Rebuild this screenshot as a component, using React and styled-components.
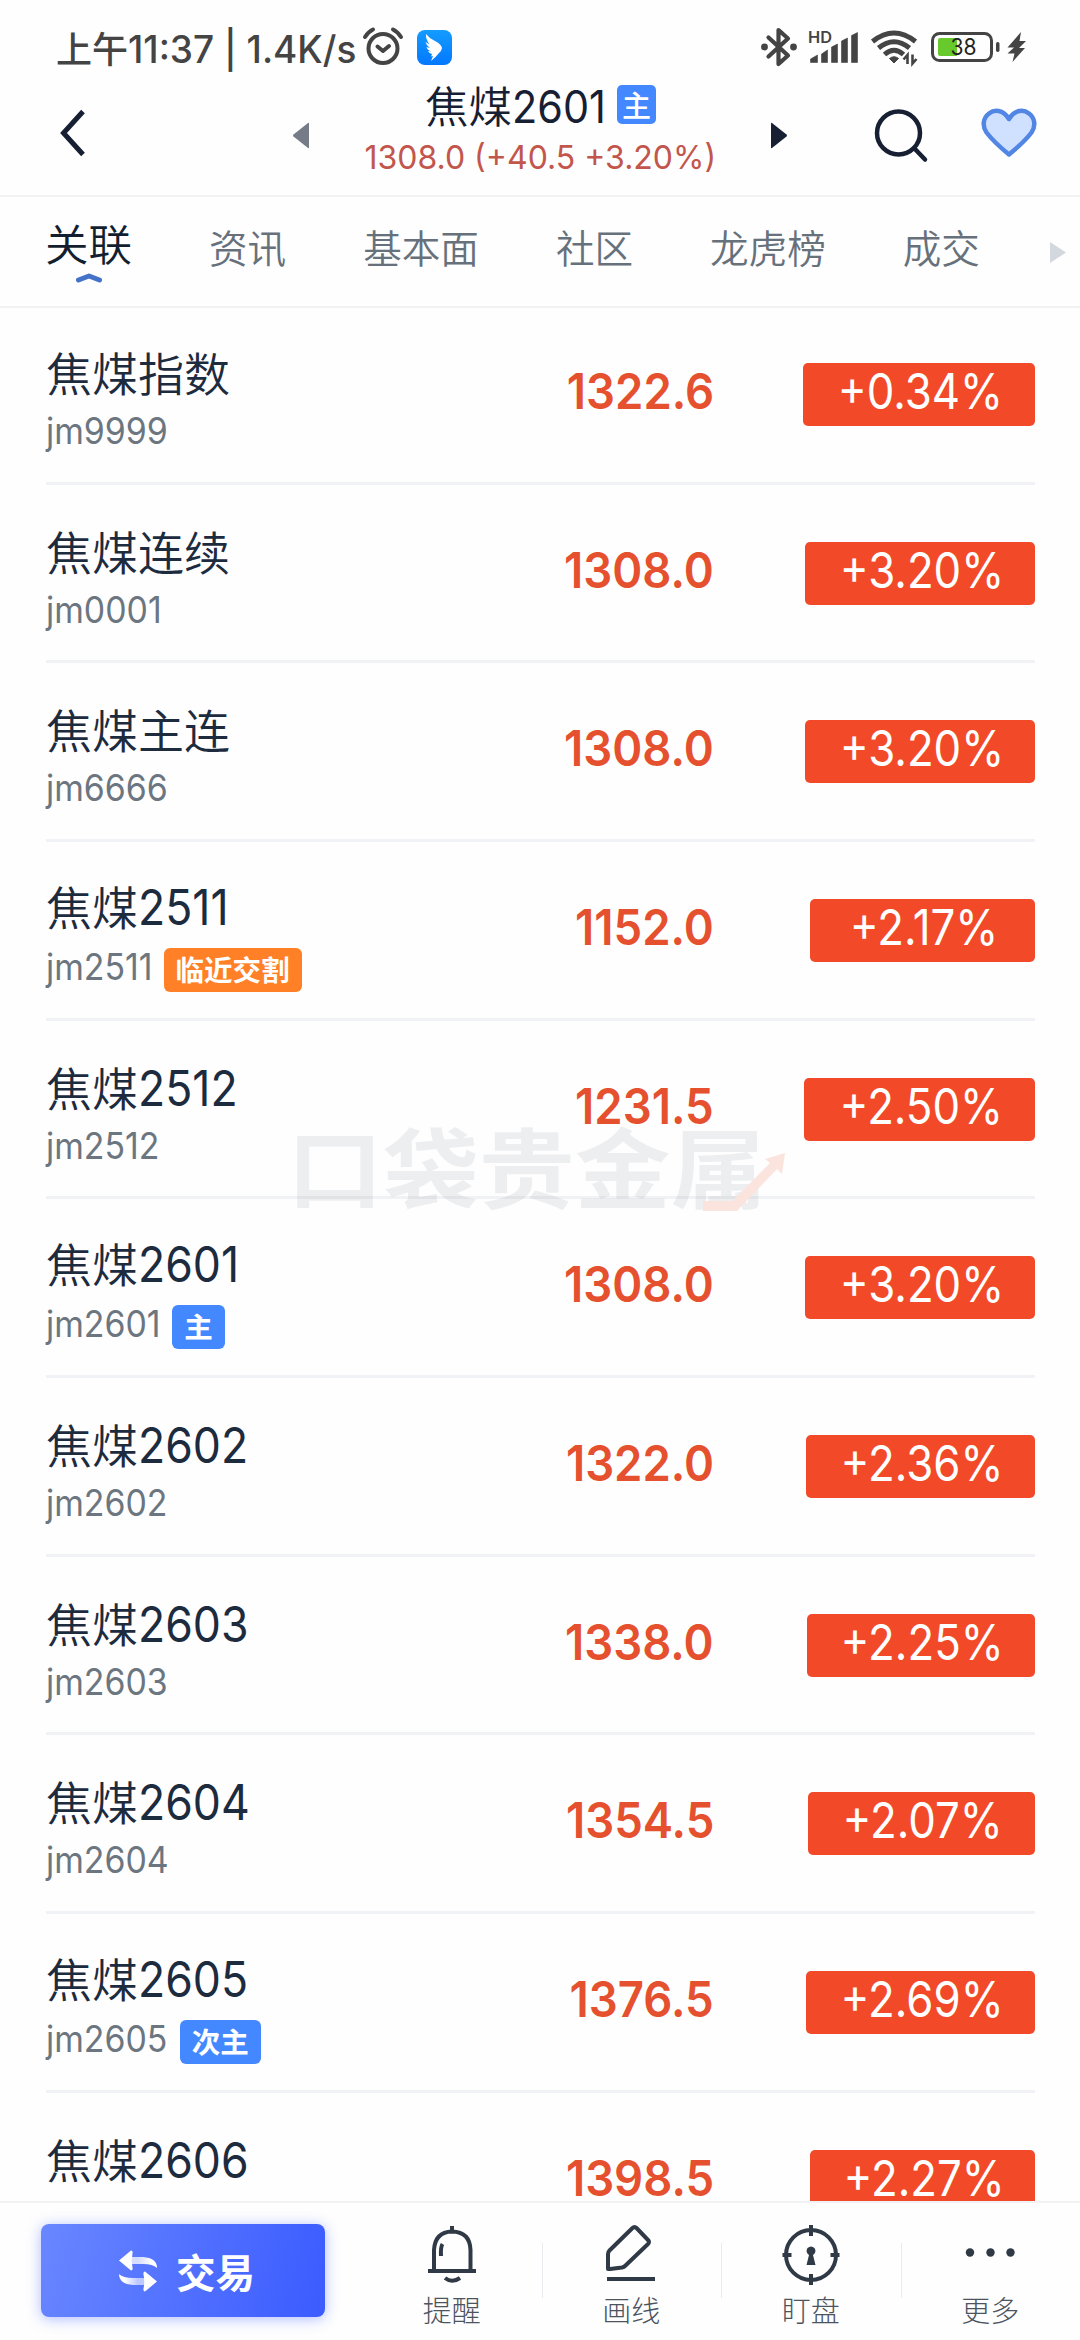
import React from 'react';
import styled, {createGlobalStyle} from 'styled-components';

const GlobalStyle = createGlobalStyle`
  * {
    box-sizing: border-box;
  }

  body {
    margin: 0;
    background: #fefefe;
    font-family: "Noto Sans CJK SC", "Noto Sans", sans-serif;
    color: #1d2b3e;
  }

  svg {
    display: block;
    flex: none;
    overflow: visible;
  }
`;

const Page = styled.div`
  position: relative;
  display: flex;
  flex-direction: column;
  width: 1080px;
  height: 2340px;
  overflow: hidden;
`;

// latin and digits run a little narrower than the chinese text
const Num = styled.span`
  display: inline-block;
  font-family: Inter, "Noto Sans", sans-serif;
  font-size: ${p => p.$size}px;
  font-weight: ${p => p.$weight || 400};
  line-height: 1;
  white-space: pre;
  transform: scaleX(${p => p.$scale || 0.91});
  transform-origin: ${p => p.$origin || 'left'} center;
`;

/* status bar */

const StatusBar = styled.div`
  display: flex;
  justify-content: space-between;
  height: 76px;
  padding: 24px 54px 0 56px;
  color: #444;
`;

const StatusLeft = styled.div`
  display: flex;
  height: 46px;
  align-items: center;
  gap: 14px;
`;

const Clock = styled.div`
  width: 293px;
  font-size: 36px;
  font-weight: 500;
  line-height: 44px;
  white-space: nowrap;
`;

const StatusRight = styled(StatusLeft)`
  gap: 12px;

  svg:last-child {
    margin-left: -5px;
  }
`;

/* header */

const Header = styled.header`
  display: flex;
  height: 121px;
  border-bottom: 2px solid #f1f2f3;
`;

const Back = styled.div`
  width: 292px;
  padding: 33px 0 0 60px;
`;

const Arrow = styled.div`
  padding-top: 46px;
`;

const Heading = styled.div`
  display: flex;
  flex-direction: column;
  align-items: center;
  width: 460px;
`;

const HeadingTitle = styled.div`
  display: flex;
  align-items: flex-start;
  height: 60px;
  padding-left: 1px;
  font-size: 43.5px;
  font-weight: 350;
  line-height: 58px;
  color: #172033;
`;

const MainTag = styled.span`
  width: 39px;
  height: 39px;
  margin: 9px 0 0 4px;
  border-radius: 5px;
  background: #4488ff;
  color: #fff;
  font-size: 29px;
  font-weight: 500;
  line-height: 38px;
  text-align: center;
`;

const HeadingPrice = styled.div`
  margin-top: 5px;
  color: #c2564c;
`;

const Actions = styled.div`
  display: flex;
  gap: 53px;
  padding: 32px 0 0 86px;
`;

/* tabs */

const Tabs = styled.nav`
  display: flex;
  height: 111px;
  padding-left: 45px;
  border-bottom: 2px solid #f1f2f3;
`;

const Tab = styled.div`
  display: flex;
  flex-direction: column;
  align-items: center;
  margin-right: 77px;
  padding-top: 29px;
  font-size: 38.6px;
  font-weight: 350;
  line-height: 40px;
  color: #67717c;
`;

const ActiveTab = styled(Tab)`
  padding-top: 24px;
  font-size: 43.5px;
  line-height: 44px;
  color: #131f30;

  svg {
    margin-top: 7px;
  }
`;

const TabsMore = styled.div`
  margin-left: -7px;
  padding-top: 45px;
`;

/* list */

const List = styled.div`
  flex: 1;
  min-height: 0;
  overflow: hidden;
  padding: 0 45px 0 46px;
  margin-top: -2px;
`;

const Row = styled.div`
  display: flex;
  height: 178.67px;
  border-bottom: 3px solid #f1f2f5;
`;

const Info = styled.div`
  display: flex;
  flex-direction: column;
  justify-content: space-between;
  width: 400px;
  height: 150px;
  padding-top: ${p => p.$tagged ? 33 : 35}px;
`;

const Name = styled.div`
  height: 60px;
  font-size: 46px;
  font-weight: 350;
  line-height: 60px;
  white-space: nowrap;
`;

const CodeLine = styled.div`
  display: flex;
  height: 44px;
  color: #6c7680;

  ${Num} {
    line-height: 38px;
  }
`;

const Tag = styled.span`
  height: 44px;
  margin-left: 1px;
  padding: 0 12px;
  border-radius: 6px;
  background: ${p => p.$color};
  color: #fff;
  font-size: 28.5px;
  font-weight: 700;
  line-height: 42px;
`;

const Price = styled.div`
  width: 268px;
  padding-top: 57px;
  text-align: right;
  color: #e5512f;

  ${Num} {
    line-height: 56px;
  }
`;

const Change = styled.div`
  display: flex;
  justify-content: center;
  width: ${p => p.$width}px;
  height: 63px;
  margin: 57px 0 0 auto;
  padding-left: 3px;
  border-radius: 5px;
  background: #f24a28;
  color: #fff;

  ${Num} {
    line-height: 56px;
  }
`;

/* watermark lies over the list */

const Watermark = styled.div`
  position: absolute;
  left: 292px;
  top: 1124px;
  width: 500px;
  height: 92px;

  svg {
    position: absolute;
    left: 411px;
    top: 28px;
  }
`;

const WatermarkText = styled.div`
  font-size: 94px;
  font-weight: 700;
  line-height: 90px;
  color: rgba(30, 45, 70, 0.075);
  white-space: nowrap;
  transform: translate(-5px, -5px) scale(1.02, 0.93);
  transform-origin: left center;
`;

/* bottom bar */

const BottomBar = styled.footer`
  display: flex;
  height: 139px;
  padding-left: 41px;
  border-top: 2px solid #f1f2f3;
`;

const TradeButton = styled.div`
  display: flex;
  align-items: center;
  gap: 18px;
  width: 284px;
  height: 93px;
  margin: 21px 37px 0 0;
  padding-left: 77px;
  border-radius: 8px;
  background: linear-gradient(105deg, #6987ff, #3b5bff);
  box-shadow: 0 2px 14px rgba(80, 110, 255, 0.45);
  color: #fff;
  font-size: 39.5px;
  font-weight: 700;
  line-height: 88px;
`;

const Tool = styled.div`
  position: relative;
  display: flex;
  flex-direction: column;
  align-items: center;
  width: 179.5px;
  padding-top: 21px;
  font-size: 29px;
  font-weight: 300;
  line-height: 34px;
  color: #4c5460;

  svg {
    margin-bottom: 6px;
  }

  & + &::before {
    content: "";
    position: absolute;
    left: 0;
    top: 40px;
    width: 1px;
    height: 55px;
    background: #e9ebee;
  }
`;

const AlarmIcon = () => (
  <svg width="40" height="38" viewBox="0 0 40 38" fill="none" stroke="#444" strokeWidth="4">
    <circle cx="20" cy="20.5" r="14.5"/>
    <path d="M14.5 18.500l5.500 4.500 6-5" strokeLinecap="round" strokeLinejoin="round"/>
    <path d="M2 9Q5 4 10 1.500M38 9Q35 4 30 1.500" strokeLinecap="round"/>
  </svg>
);

const WingIcon = () => (
  <svg width="35" height="35" viewBox="0 0 35 35">
    <defs>
      <linearGradient id="wing" x1="0" y1="0" x2="0" y2="1">
        <stop offset="0" stopColor="#149cff"/>
        <stop offset="1" stopColor="#0378ff"/>
      </linearGradient>
    </defs>
    <rect width="35" height="35" rx="8" fill="url(#wing)"/>
    <path d="M9 4q3 4 9 7 6 3 7 7-.5 3-3 5-3 4-8 8l2-5-2 .5 1-2.500q-3-.5-4-3l3 .5q-4-2-4.500-4.500l3.500 1q-4-3-4.500-6l4 2.500Q8.500 9 9 4z" fill="#fff"/>
  </svg>
);

const BluetoothIcon = () => (
  <svg width="36" height="40" viewBox="0 0 36 40" fill="none" stroke="#444" strokeWidth="4.200">
    <path d="M7.500 10.500L27 28.500 17.500 37V3L27 11.500 7.500 29.500" strokeLinejoin="round" strokeLinecap="round"/>
    <circle cx="3.500" cy="20" r="3.400" fill="#444" stroke="none"/>
    <circle cx="32.500" cy="20" r="3.400" fill="#444" stroke="none"/>
  </svg>
);

const SignalIcon = () => (
  <svg width="50" height="34" viewBox="0 0 50 34" fill="#444">
    <text x="-1" y="12.500" fontFamily="Inter" fontSize="16" fontWeight="600" textLength="24" lengthAdjust="spacingAndGlyphs">HD</text>
    <path d="M1.500 29l7-4v7.500h-7zM12.500 24l6-4v12.500h-6zM22.500 17l6-3v18.500h-6zM32.500 11l6-3v24.500h-6zM42.500 5.500l6-3v30h-6z" stroke="#444" strokeWidth=".6" strokeLinejoin="round"/>
  </svg>
);

const WifiIcon = () => (
  <svg width="48" height="36" viewBox="0 0 48 36" fill="none" stroke="#444" strokeWidth="5">
    <path d="M1.500 12.500Q23-4.500 44.500 12.500M7.500 19Q23 6.500 38.500 19M13.500 25.500Q23 17 32.500 25.500"/>
    <path d="M18.500 29.500q4.500-3.500 9 0L23 34z" fill="#444" stroke="#444" strokeWidth="1" strokeLinejoin="round"/>
    <path d="M36.500 35v-9l-4 4.500M41.500 25.500v9l4-4.500" strokeWidth="2.600"/>
  </svg>
);

const BatteryIcon = () => (
  <svg width="70" height="32" viewBox="0 0 70 32">
    <rect x="1.500" y="2.500" width="59" height="27" rx="7" fill="none" stroke="#444" strokeWidth="3"/>
    <path d="M9 7h17v18H9q-2 0-2-2V9q0-2 2-2z" fill="#68c92c"/>
    <rect x="65" y="11" width="3.500" height="10" rx="1.700" fill="#444"/>
    <text x="19.500" y="24" fontFamily="Inter" fontSize="22.500" fontWeight="400" textLength="26" lengthAdjust="spacingAndGlyphs" fill="#222">38</text>
  </svg>
);

const BoltIcon = () => (
  <svg width="18" height="32" viewBox="0 0 18 32" fill="#444">
    <path d="M13 1L-.5 16.500H6L-.5 22.500H6.500L4.500 31 17 17h-6l7-7H11.500z"/>
  </svg>
);

const TradeIcon = () => (
  <svg width="40" height="44" viewBox="0 0 40 44">
    <defs>
      <linearGradient id="tradeL" x1="0" x2="1">
        <stop offset="0.3" stopColor="#fff" stopOpacity="0.75"/>
        <stop offset="0.8" stopColor="#fff"/>
      </linearGradient>
      <linearGradient id="tradeR" x1="1" x2="0">
        <stop offset="0.3" stopColor="#fff" stopOpacity="0.6"/>
        <stop offset="0.8" stopColor="#fff"/>
      </linearGradient>
    </defs>
    <path d="M12 8h13q14 1 14 11-4-4-14-4H12z" fill="url(#tradeL)"/>
    <path d="M1 11.500L13 1.500q2 0 1.500 3-1.500 7 0 14 .5 3-1.500 3z" fill="#fff"/>
    <path d="M28 36H15Q1 35 1 25q4 4 14 4h13z" fill="url(#tradeR)"/>
    <path d="M39 32.500l-12 10q-2 0-1.500-3 1.500-7 0-14-.5-3 1.500-3z" fill="#fff"/>
  </svg>
);

const BellIcon = () => (
  <svg width="60" height="62" viewBox="0 0 60 62" fill="none" stroke="#303946" strokeWidth="4">
    <path d="M12 47V26Q13 8 30 7.500 48 8 48.500 26v21M6 47h48M30 2v5"/>
    <path d="M20.500 20q-2 3-1.500 12"/>
    <path d="M23 54q7 5.500 15 0"/>
  </svg>
);

const PenIcon = () => (
  <svg width="60" height="62" viewBox="0 0 60 62" fill="none" stroke="#303946" strokeWidth="4" strokeLinejoin="round">
    <path d="M7 45V30q0-2 1.500-3.500L31.500 4q2-2 4 0L47 16q2 2 0 4L24 42q-1 1-3 1.500L9 45q-2 .5-2-1z"/>
    <path d="M6 55h48"/>
  </svg>
);

const WatchIcon = () => (
  <svg width="60" height="62" viewBox="0 0 60 62" fill="none" stroke="#303946" strokeWidth="4">
    <circle cx="30" cy="31" r="25"/>
    <path d="M30 1v11M30 50v11M1.500 31h9M49.500 31h9"/>
    <path d="M25.500 41l2.500-10q-4-3-1.500-7 3.500-3 7 0 2.500 4-1.500 7l2.500 10z" fill="#303946" stroke="none"/>
  </svg>
);

const MoreIcon = () => (
  <svg width="60" height="62" viewBox="0 0 60 62" fill="#303946">
    <circle cx="10" cy="28.500" r="4.200"/>
    <circle cx="30.500" cy="28.500" r="4.200"/>
    <circle cx="50.500" cy="28.500" r="4.200"/>
  </svg>
);

const contracts = [
  {name: '焦煤指数', code: 'jm9999', price: '1322.6', change: '+0.34%', width: 232},
  {name: '焦煤连续', code: 'jm0001', price: '1308.0', change: '+3.20%', width: 230},
  {name: '焦煤主连', code: 'jm6666', price: '1308.0', change: '+3.20%', width: 230},
  {name: '焦煤', month: '2511', code: 'jm2511', price: '1152.0', change: '+2.17%', width: 225, tag: '临近交割', tagColor: '#ff8026'},
  {name: '焦煤', month: '2512', code: 'jm2512', price: '1231.5', change: '+2.50%', width: 231},
  {name: '焦煤', month: '2601', code: 'jm2601', price: '1308.0', change: '+3.20%', width: 230, tag: '主', tagColor: '#4488ff'},
  {name: '焦煤', month: '2602', code: 'jm2602', price: '1322.0', change: '+2.36%', width: 229},
  {name: '焦煤', month: '2603', code: 'jm2603', price: '1338.0', change: '+2.25%', width: 228},
  {name: '焦煤', month: '2604', code: 'jm2604', price: '1354.5', change: '+2.07%', width: 227},
  {name: '焦煤', month: '2605', code: 'jm2605', price: '1376.5', change: '+2.69%', width: 229, tag: '次主', tagColor: '#4488ff'},
  {name: '焦煤', month: '2606', code: 'jm2606', price: '1398.5', change: '+2.27%', width: 225},
];

const ContractRow = ({item}) => (
  <Row>
    <Info $tagged={!!item.tag}>
      <Name>
        {item.name}
        {item.month && <Num $size={49}>{item.month}</Num>}
      </Name>
      <CodeLine>
        <Num $size={37} $scale={0.915}>{item.code}</Num>
        {item.tag && <Tag $color={item.tagColor}>{item.tag}</Tag>}
      </CodeLine>
    </Info>
    <Price>
      <Num $size={49.5} $weight={600} $scale={0.92} $origin="right">{item.price}</Num>
    </Price>
    <Change $width={item.width}>
      <Num $size={49.5} $scale={0.885} $origin="center">{item.change}</Num>
    </Change>
  </Row>
);

const App = () => (
  <Page>
    <GlobalStyle/>
    <StatusBar>
      <StatusLeft>
        <Clock>
          上午<Num $size={37.5} $weight={500} $scale={0.985}>11:37 | 1.4K/s</Num>
        </Clock>
        <AlarmIcon/>
        <WingIcon/>
      </StatusLeft>
      <StatusRight>
        <BluetoothIcon/>
        <SignalIcon/>
        <WifiIcon/>
        <BatteryIcon/>
        <BoltIcon/>
      </StatusRight>
    </StatusBar>

    <Header>
      <Back>
        <svg width="26" height="48" viewBox="0 0 26 48" fill="none" stroke="#172033" strokeWidth="5">
          <path d="M23 2.500L3.500 24 23 45.500"/>
        </svg>
      </Back>
      <Arrow>
        <svg width="18" height="27" viewBox="0 0 18 27" fill="#757b87">
          <path d="M17 1.500v24q0 1-1 .5L1.500 14.500q-1-1 0-2L16 1q1-.5 1 .5z"/>
        </svg>
      </Arrow>
      <Heading>
        <HeadingTitle>
          <span>焦煤<Num $size={44.5} $scale={0.93}>2601</Num></span>
          <MainTag>主</MainTag>
        </HeadingTitle>
        <HeadingPrice>
          <Num $size={33} $origin="center" $scale={0.97}>1308.0 (+40.5 +3.20%)</Num>
        </HeadingPrice>
      </Heading>
      <Arrow>
        <svg width="18" height="27" viewBox="0 0 18 27" fill="#172033">
          <path d="M1 1.500v24q0 1 1 .5l14.500-11.500q1-1 0-2L2 1Q1 .5 1 1.500z"/>
        </svg>
      </Arrow>
      <Actions>
        <svg width="54" height="54" viewBox="0 0 54 54" fill="none" stroke="#172033" strokeWidth="4.500">
          <circle cx="24.500" cy="25" r="21.500"/>
          <path d="M40.500 40.500L51 51.500" strokeLinecap="round"/>
        </svg>
        <svg width="56" height="52" viewBox="0 0 56 52" fill="#d0e1ff" stroke="#5286e4" strokeWidth="4.500" strokeLinejoin="round">
          <path d="M28 11C22 1 13 1.500 8 5.500 2 10 1 18 5.500 24.500 12 33 20 40 28 46.500 36 40 44 33 50.500 24.500 55 18 54 10 48 5.500 43 1.500 34 1 28 11z"/>
        </svg>
      </Actions>
    </Header>

    <Tabs>
      <ActiveTab>
        关联
        <svg width="28" height="12" viewBox="0 0 28 12" fill="none" stroke="#4472c8" strokeWidth="5" strokeLinecap="round" strokeLinejoin="round">
          <path d="M3.500 8L14 4l10.500 4"/>
        </svg>
      </ActiveTab>
      <Tab>资讯</Tab>
      <Tab>基本面</Tab>
      <Tab>社区</Tab>
      <Tab>龙虎榜</Tab>
      <Tab>成交</Tab>
      <TabsMore>
        <svg width="17" height="21" viewBox="0 0 17 21" fill="#d3d7de">
          <path d="M0 0l16 10.500L0 21z"/>
        </svg>
      </TabsMore>
    </Tabs>

    <List>
      {contracts.map(item => <ContractRow key={item.code} item={item}/>)}
    </List>

    <Watermark>
      <WatermarkText>口袋贵金属</WatermarkText>
      <svg width="84" height="60" viewBox="0 0 84 60" fill="#fbe4de">
        <path d="M0 49h29.500L67 11l-5-4 20-6-3 21-5-5-40 42H0z"/>
      </svg>
    </Watermark>

    <BottomBar>
      <TradeButton>
        <TradeIcon/>
        交易
      </TradeButton>
      <Tool><BellIcon/>提醒</Tool>
      <Tool><PenIcon/>画线</Tool>
      <Tool><WatchIcon/>盯盘</Tool>
      <Tool><MoreIcon/>更多</Tool>
    </BottomBar>
  </Page>
);

export default App;
